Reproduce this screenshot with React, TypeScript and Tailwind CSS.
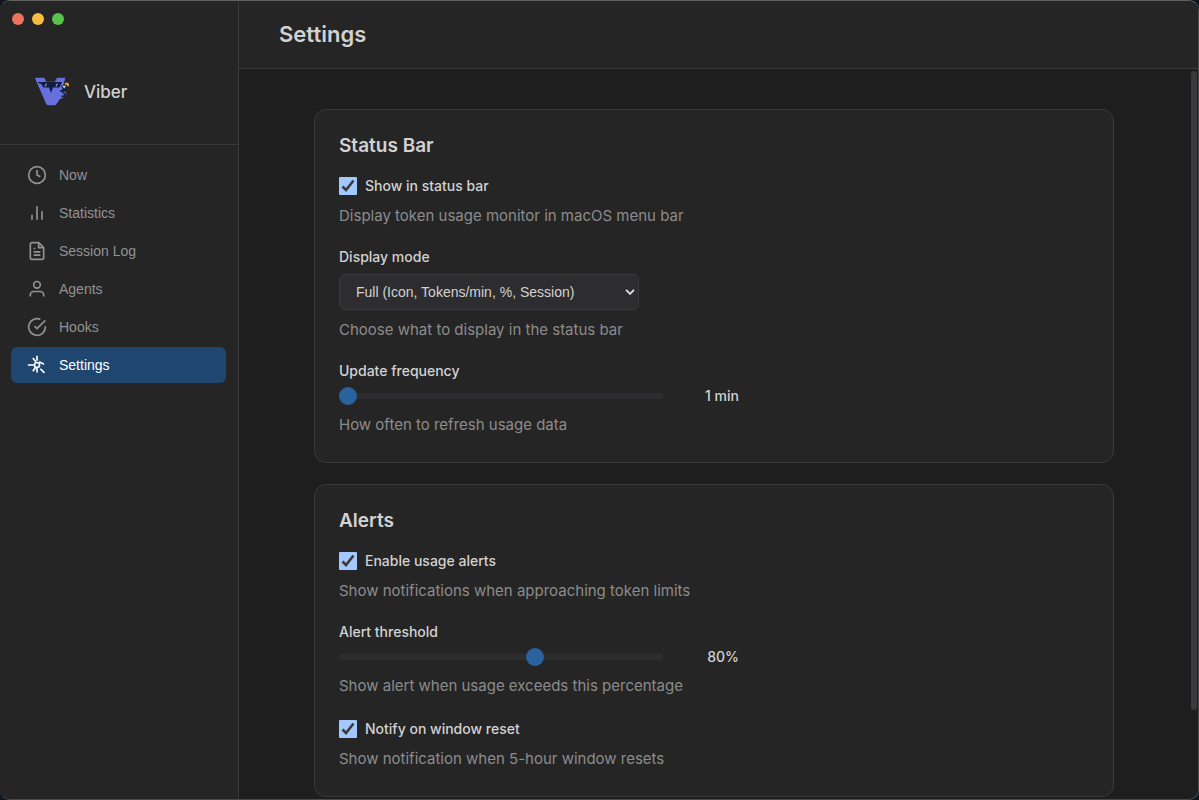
import { useState } from "react";
import type { ReactNode } from "react";

function Icon({ children }: { children: ReactNode }) {
  return (
    <svg
      viewBox="0 0 24 24"
      className="size-5 shrink-0"
      fill="none"
      stroke="currentColor"
      strokeWidth="2"
      aria-hidden="true"
    >
      {children}
    </svg>
  );
}

const navItems: { label: string; icon: ReactNode }[] = [
  {
    label: "Now",
    icon: (
      <>
        <circle cx="12" cy="12" r="10" />
        <path d="M12 6v6l4 2" />
      </>
    ),
  },
  { label: "Statistics", icon: <path d="M18 20V10M12 20V4M6 20v-6" /> },
  {
    label: "Session Log",
    icon: (
      <>
        <path d="M14 2H6a2 2 0 0 0-2 2v16a2 2 0 0 0 2 2h12a2 2 0 0 0 2-2V8z" />
        <path d="M14 2v6h6M16 13H8M16 17H8M10 9H8" />
      </>
    ),
  },
  {
    label: "Agents",
    icon: (
      <>
        <path d="M20 21v-2a4 4 0 0 0-4-4H8a4 4 0 0 0-4 4v2" />
        <circle cx="12" cy="7" r="4" />
      </>
    ),
  },
  {
    label: "Hooks",
    icon: (
      <>
        <path d="M22 11.08V12a10 10 0 1 1-5.93-9.14" />
        <path d="M22 4 12 14.01l-3-3" />
      </>
    ),
  },
  {
    label: "Settings",
    icon: (
      <>
        <circle cx="12" cy="12" r="3" />
        <path d="M12 1v6M12 15v6M1 12h8M7 3.500l3.600 4.500M14.500 8l6 3M16 16.500l5 5M7 19.500l3.500-5" />
      </>
    ),
  },
];

function Logo() {
  return (
    <svg viewBox="0 0 36 33" className="h-[33px] w-9" aria-hidden="true">
      <path
        d="M2 1.700h8.500l1.500 4h9l2-4h7.500q1 0 .7 1L29 10l-1 5 4 1-1 4.500-5.500 3-3 4.500q-.8 1.200-2.200 1.200h-6q-1.500 0-2.200-1.500L1.300 3Q.8 1.700 2 1.700z"
        fill="#6770dc"
      />
      <path d="M4 6h24l-1 2-1.500 3.500H19L17 17l-2-5.500H9.500L7 7.800 4 7z" fill="#121b41" />
      <path d="m11 10.500 1.500-3M22 10.500l1.500-3" stroke="#8793dc" strokeWidth="1.200" fill="none" />
      <path d="M27.500 9.500 30 13l-1.500 3 2 1.500v2.800h-3M30 13l2.500-3M26 15l3-.500" stroke="#121b41" strokeWidth="1.400" fill="none" />
      <path d="M28 9.800h4.200L30.300 12.500z" fill="#b9d5ec" />
      <path d="M30.500 8.500a2.300 2.300 0 1 1 3.500 2.300l-1.300-2z" fill="#eda43b" />
    </svg>
  );
}

function CheckRow({ id, label, hint }: { id: string; label: string; hint: string }) {
  return (
    <div>
      <div className="flex h-6 items-center gap-2">
        <span className="relative flex size-[18px]">
          <input
            id={id}
            type="checkbox"
            defaultChecked
            className="peer size-[18px] appearance-none rounded-[1px] border border-[#858585] checked:border-0 checked:bg-[#a3c7ff]"
          />
          <svg
            viewBox="0 0 18 18"
            className="pointer-events-none absolute inset-0 hidden peer-checked:block"
            fill="none"
            stroke="#3b3b3b"
            strokeWidth="2.600"
            aria-hidden="true"
          >
            <path d="m3.500 9.500 3.500 3.500 7.500-9.500" />
          </svg>
        </span>
        <label htmlFor={id} className="text-sm font-medium">
          {label}
        </label>
      </div>
      <Hint>{hint}</Hint>
    </div>
  );
}

function Hint({ children }: { children: ReactNode }) {
  return <p className="mt-1.5 text-[15px] leading-[23px] text-[#8c8c8c]">{children}</p>;
}

function SliderRow(props: {
  id: string;
  label: string;
  hint: string;
  min: number;
  max: number;
  initial: number;
  format: (v: number) => string;
}) {
  const [value, setValue] = useState(props.initial);
  return (
    <div>
      <label htmlFor={props.id} className="block text-sm font-medium">
        {props.label}
      </label>
      <div className="mt-1 flex h-[22px] max-w-[400px] items-center gap-4">
        <input
          id={props.id}
          type="range"
          min={props.min}
          max={props.max}
          value={value}
          onChange={(e) => setValue(Number(e.target.value))}
          className="h-1.5 min-w-0 flex-1 appearance-none rounded-full bg-[#2d2d2f] [&::-webkit-slider-thumb]:size-[18px] [&::-webkit-slider-thumb]:appearance-none [&::-webkit-slider-thumb]:rounded-full [&::-webkit-slider-thumb]:bg-[#2a629d]"
        />
        <output htmlFor={props.id} className="w-[60px] text-right text-sm font-medium">
          {props.format(value)}
        </output>
      </div>
      <Hint>{props.hint}</Hint>
    </div>
  );
}

function Card({ title, children }: { title: string; children: ReactNode }) {
  return (
    <section className="rounded-xl border border-[#3a3a3c] bg-[#252525] px-6 pt-6 pb-[26px]">
      <h2 className="mb-4 text-[19px] leading-6 font-semibold">{title}</h2>
      <div className="flex flex-col gap-5">{children}</div>
    </section>
  );
}

export default function App() {
  const [active, setActive] = useState("Settings");
  return (
    <div className="h-screen bg-[#101622] font-['Inter',sans-serif] text-[#d2d2d2]">
      <div className="flex h-full overflow-hidden rounded-[10px] border-t border-r border-b border-t-[#626262] border-r-[#4a4a4a] border-b-[#4a4a4a] bg-[#1e1e1e]">
        <aside className="flex w-[239px] shrink-0 flex-col border-r border-[#3a3a3c] bg-[#252525]">
          <div className="flex gap-2 px-3 pt-3">
            <span className="size-3 rounded-full bg-[#ee735f]" />
            <span className="size-3 rounded-full bg-[#f6be41]" />
            <span className="size-3 rounded-full bg-[#5ac350]" />
          </div>
          <div className="flex h-[120px] items-center gap-3.5 border-b border-[#3a3a3c] pt-6 pb-2 pl-[34px]">
            <Logo />
            <span className="text-[17px] font-medium">Viber</span>
          </div>
          <nav className="flex flex-col gap-0.5 py-3 pr-3 pl-[11px] font-['Liberation_Sans',sans-serif]">
            {navItems.map((item) => (
              <button
                key={item.label}
                type="button"
                onClick={() => setActive(item.label)}
                className={
                  item.label === active
                    ? "flex h-9 items-center gap-3 rounded-md bg-[#1e466f] px-4 text-sm text-white"
                    : "flex h-9 items-center gap-3 rounded-md px-4 text-sm text-[#929292]"
                }
              >
                <Icon>{item.icon}</Icon>
                {item.label}
              </button>
            ))}
          </nav>
        </aside>
        <div className="flex min-w-0 flex-1 flex-col">
          <header className="flex h-[68px] shrink-0 items-center border-b border-[#3a3a3c] bg-[#252525] px-10">
            <h1 className="text-[22px] font-semibold">Settings</h1>
          </header>
          <div className="flex min-h-0 flex-1">
            <main className="min-w-0 flex-1 overflow-y-auto px-10 pt-10 [scrollbar-width:none]">
              <div className="mx-auto flex max-w-[800px] flex-col gap-[21px] pb-[67px]">
                <Card title="Status Bar">
                  <CheckRow
                    id="status-bar"
                    label="Show in status bar"
                    hint="Display token usage monitor in macOS menu bar"
                  />
                  <div>
                    <label htmlFor="display-mode" className="block text-sm font-medium">
                      Display mode
                    </label>
                    <div className="relative mt-[7px] mb-2 max-w-[300px]">
                      <select
                        id="display-mode"
                        className="block h-9 w-full appearance-none rounded-md border border-[#3a3a3c] bg-[#2d2d2f] px-4 font-['Liberation_Sans',sans-serif] text-sm"
                      >
                        <option>Full (Icon, Tokens/min, %, Session)</option>
                        <option>Compact</option>
                        <option>Icon only</option>
                      </select>
                      <svg
                        viewBox="0 0 10 6"
                        className="pointer-events-none absolute top-[15px] right-1 h-1.5 w-2.5"
                        fill="none"
                        stroke="#e4e4e4"
                        strokeWidth="1.800"
                        aria-hidden="true"
                      >
                        <path d="m1 .8 4 4 4-4" />
                      </svg>
                    </div>
                    <Hint>Choose what to display in the status bar</Hint>
                  </div>
                  <SliderRow
                    id="frequency"
                    label="Update frequency"
                    hint="How often to refresh usage data"
                    min={1}
                    max={30}
                    initial={1}
                    format={(v) => `${v} min`}
                  />
                </Card>
                <Card title="Alerts">
                  <CheckRow
                    id="usage-alerts"
                    label="Enable usage alerts"
                    hint="Show notifications when approaching token limits"
                  />
                  <SliderRow
                    id="threshold"
                    label="Alert threshold"
                    hint="Show alert when usage exceeds this percentage"
                    min={50}
                    max={99}
                    initial={80}
                    format={(v) => `${v}%`}
                  />
                  <CheckRow
                    id="window-reset"
                    label="Notify on window reset"
                    hint="Show notification when 5-hour window resets"
                  />
                </Card>
              </div>
            </main>
            <div className="w-[9px] shrink-0 py-0.5 pr-px pl-0.5" aria-hidden="true">
              <div className="h-[88%] rounded-full bg-[#3a3a3c]" />
            </div>
          </div>
        </div>
      </div>
    </div>
  );
}
